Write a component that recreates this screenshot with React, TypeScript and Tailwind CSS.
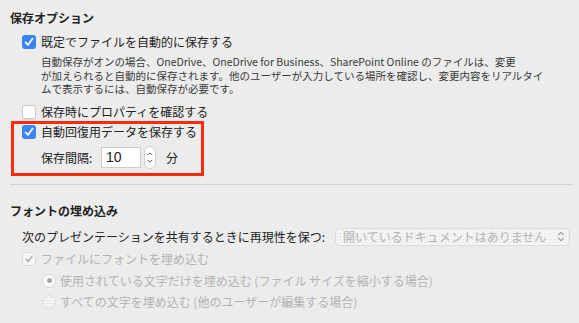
import React from "react";

const Check = ({ color = "white" }: { color?: string }) => (
    <svg viewBox="0 0 14 14" className="w-[14px] h-[14px]">
        <path d="M3.6 7.4 L6 9.9 L10.6 3.6" fill="none" stroke={color} strokeWidth="1.7" strokeLinecap="round" strokeLinejoin="round" />
    </svg>
);

const CheckBox = ({ checked, disabled }: { checked?: boolean; disabled?: boolean }) => {
    if (disabled) {
        return (
            <div className="w-[14px] h-[14px] rounded-[3px] border border-[#dadada] bg-[#f6f6f6] flex items-center justify-center shrink-0">
                <Check color="#a9a9a9" />
            </div>
        );
    }
    if (checked) {
        return (
            <div className="w-[14px] h-[14px] rounded-[3px] bg-[#3b84f6] flex items-center justify-center shrink-0">
                <Check />
            </div>
        );
    }
    return <div className="w-[14px] h-[14px] rounded-[3px] border border-[#c9c9c9] bg-white shadow-[0_0.5px_1px_rgba(0,0,0,0.08)] shrink-0" />;
};

const Radio = ({ selected }: { selected?: boolean }) => (
    <div
        className={
            selected
                ? "w-[14px] h-[14px] rounded-full border border-[#d6d6d6] bg-[#fafafa] flex items-center justify-center shrink-0"
                : "w-[14px] h-[14px] rounded-full border border-[#dedede] bg-[#f3f3f3] bg-[radial-gradient(#dddddd_0.6px,transparent_0.6px)] bg-[length:3px_3px] shrink-0"
        }
    >
        {selected && <div className="w-[5px] h-[5px] rounded-full bg-[#a6a6a6]" />}
    </div>
);

const App = () => {
    return (
        <div
            className="w-[579px] h-[323px] overflow-hidden bg-[#ececec] text-[#232323]"
            style={{ fontFamily: '"Noto Sans CJK JP", "Liberation Sans", sans-serif' }}
        >
            <div className="pt-[9px] pl-[10px]">
                {/* 保存オプション */}
                <h2 className="h-[18px] leading-[18px] text-[12px] font-bold">保存オプション</h2>

                <div className="mt-[6px] h-[18px] pl-[12px] flex items-center gap-[5px]">
                    <CheckBox checked />
                    <span className="text-[12px] leading-[18px]">既定でファイルを自動的に保存する</span>
                </div>

                <div className="mt-[4px] pl-[31px] text-[10.5px] leading-[13.5px] text-[#3a3a3a] whitespace-nowrap">
                    <div>自動保存がオンの場合、OneDrive、OneDrive for Business、SharePoint Online のファイルは、変更</div>
                    <div>が加えられると自動的に保存されます。他のユーザーが入力している場所を確認し、変更内容をリアルタイ</div>
                    <div>ムで表示するには、自動保存が必要です。</div>
                </div>

                <div className="mt-[7px] h-[18px] pl-[12px] flex items-center gap-[5px]">
                    <CheckBox />
                    <span className="text-[12px] leading-[18px]">保存時にプロパティを確認する</span>
                </div>

                {/* highlighted box */}
                <div className="ml-[1px] w-[193px] h-[55px] border-[3px] border-[#ff2a08] pl-[8px]">
                    <div className="h-[16px] flex items-center gap-[5px]">
                        <CheckBox checked />
                        <span className="text-[12px] leading-[16px]">自動回復用データを保存する</span>
                    </div>
                    <div className="mt-[7px] h-[22px] pl-[19px] flex items-center">
                        <span className="text-[12px] w-[60px]">保存間隔:</span>
                        <div className="w-[40px] h-[21px] border border-[#cbcbcb] bg-white flex items-center pl-[4px] text-[14px]" style={{ fontFamily: '"Liberation Sans", sans-serif' }}>
                            10
                        </div>
                        <div className="ml-[3px] w-[12px] h-[23px] rounded-[6px] border border-[#cdcdcd] bg-white flex flex-col items-center justify-center gap-[3px]">
                            <svg viewBox="0 0 8 5" className="w-[6px] h-[4px]">
                                <path d="M1 4 L4 1 L7 4" fill="none" stroke="#444" strokeWidth="1.2" />
                            </svg>
                            <svg viewBox="0 0 8 5" className="w-[6px] h-[4px]">
                                <path d="M1 1 L4 4 L7 1" fill="none" stroke="#444" strokeWidth="1.2" />
                            </svg>
                        </div>
                        <span className="ml-[10px] text-[12px]">分</span>
                    </div>
                </div>

                <div className="mt-[8px] w-[563px] h-px bg-[#d2d2d2]" />

                {/* フォントの埋め込み */}
                <h2 className="mt-[17px] h-[18px] leading-[18px] text-[12px] font-bold">フォントの埋め込み</h2>

                <div className="mt-[8px] h-[18px] pl-[12px] flex items-center">
                    <span className="text-[12px] w-[313px] shrink-0 whitespace-nowrap">次のプレゼンテーションを共有するときに再現性を保つ:</span>
                    <div className="w-[235px] shrink-0 h-[18px] rounded-[4px] border border-[#dcdcdc] bg-[#f4f4f4] bg-[radial-gradient(#e0e0e0_0.6px,transparent_0.6px)] bg-[length:3px_3px] flex items-center pl-[7px] pr-[3px]">
                        <span className="text-[12px] text-[#b3b3b3] leading-none whitespace-nowrap">開いているドキュメントはありません</span>
                        <svg viewBox="0 0 10 14" className="ml-auto w-[10px] h-[13px] shrink-0">
                            <path d="M2 5.5 L5 2.5 L8 5.5 M2 8.5 L5 11.5 L8 8.5" fill="none" stroke="#9c9c9c" strokeWidth="1.3" />
                        </svg>
                    </div>
                </div>

                <div className="mt-[5px] h-[16px] pl-[12px] flex items-center gap-[5px] text-[#b3b3b3]">
                    <CheckBox disabled />
                    <span className="text-[12px]">ファイルにフォントを埋め込む</span>
                </div>

                <div className="mt-[6px] h-[16px] pl-[32px] flex items-center gap-[4px] text-[#b3b3b3]">
                    <Radio selected />
                    <span className="text-[12px]">使用されている文字だけを埋め込む (ファイル サイズを縮小する場合)</span>
                </div>

                <div className="mt-[5px] h-[16px] pl-[32px] flex items-center gap-[4px] text-[#b3b3b3]">
                    <Radio />
                    <span className="text-[12px]">すべての文字を埋め込む (他のユーザーが編集する場合)</span>
                </div>
            </div>
        </div>
    );
};

export default App;
